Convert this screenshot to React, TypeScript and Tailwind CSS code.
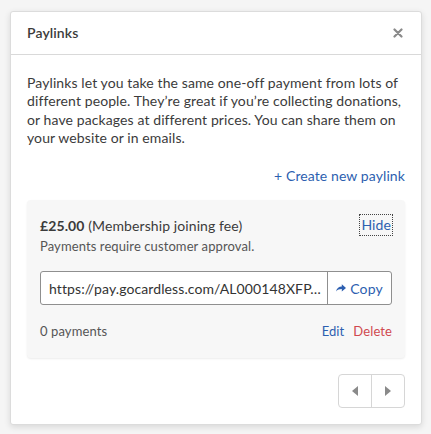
import React from "react";

export default function App() {
  return (
    <div
      className="min-h-screen bg-[#f5f5f5] pt-[11px] pl-[10px] pr-[9px] pb-[10px] text-[#3b3b3b] tracking-[0.1px]"
      style={{ fontFamily: "Lato, 'Noto Sans', sans-serif" }}
    >
      <div className="bg-white rounded-[3px] border border-[#dcdcdc] shadow-[0_2px_6px_rgba(0,0,0,0.12)]">
        <div className="h-[43px] flex items-center justify-between px-4 border-b border-[#d9d9d9]">
          <span className="text-[14px] font-semibold text-[#3b3b3b] -mt-[1px]">Paylinks</span>
          <svg width="10" height="10" viewBox="0 0 10 10" className="mr-[2px]">
            <path d="M1.5 1.5 L8.5 8.5 M8.5 1.5 L1.5 8.5" stroke="#8a8a8a" strokeWidth="2.2" strokeLinecap="round" />
          </svg>
        </div>
        <div className="px-4 pt-[19px] pb-4">
          <p className="text-[14px] leading-[18.3px] text-[#3b3b3b]">
            Paylinks let you take the same one-off payment from lots of different people. They’re great if you’re collecting donations, or have packages at different prices. You can share them on your website or in emails.
          </p>
          <div className="flex justify-end mt-[18px]">
            <span className="text-[14px] text-[#2d5fb0]">+ Create new paylink</span>
          </div>
          <div className="mt-[14px] bg-[#f7f7f7] rounded-[4px] shadow-[0_1px_2px_rgba(0,0,0,0.08)] px-[13px] pt-[16px] pb-[16px]">
            <div className="flex items-start justify-between">
              <div>
                <div className="text-[14px] leading-[20px]">
                  <span className="font-bold">£25.00</span> (Membership joining fee)
                </div>
                <div className="text-[13px] leading-[20px] text-[#555] mt-[0px]">Payments require customer approval.</div>
              </div>
              <span className="text-[14px] leading-[20px] text-[#2d5fb0] outline outline-1 outline-dotted outline-[#444] px-[1px] -mt-[1px]">Hide</span>
            </div>
            <div className="mt-[15px] flex h-[34px] border border-[#8f8f8f] rounded-[3px] bg-white">
              <div className="flex-1 min-w-0 flex items-center px-[8px] text-[14px] text-[#333] whitespace-nowrap">
                <span>https://pay.gocardless.com/AL000148XFP…</span>
              </div>
              <div className="w-[64px] flex items-center justify-center gap-[4px] border-l border-[#8f8f8f] text-[14px] text-[#2d5fb0]">
                <svg width="10" height="8" viewBox="0 0 10 8">
                  <path d="M0 7.5 C0.8 4.3 3 2.6 5.8 2.6 L5.8 0.3 L10 3.9 L5.8 7.5 L5.8 5.1 C3.3 5.1 1.5 5.8 0 7.5 Z" fill="#2d5fb0" />
                </svg>
                <span>Copy</span>
              </div>
            </div>
            <div className="mt-[17px] flex items-center justify-between text-[13px]">
              <span className="text-[#555]">0 payments</span>
              <div className="flex gap-[9px]">
                <span className="text-[#2d5fb0]">Edit</span>
                <span className="text-[#d0494f]">Delete</span>
              </div>
            </div>
          </div>
          <div className="flex justify-end mt-[16px]">
            <div className="flex h-[34px] border border-[#d6d6d6] rounded-[4px]">
              <div className="w-[33px] flex items-center justify-center border-r border-[#d6d6d6]">
                <svg width="6" height="10" viewBox="0 0 6 10"><path d="M6 0 L0 5 L6 10 Z" fill="#8a8a8a" /></svg>
              </div>
              <div className="w-[32px] flex items-center justify-center">
                <svg width="6" height="10" viewBox="0 0 6 10"><path d="M0 0 L6 5 L0 10 Z" fill="#8a8a8a" /></svg>
              </div>
            </div>
          </div>
        </div>
      </div>
    </div>
  );
}
